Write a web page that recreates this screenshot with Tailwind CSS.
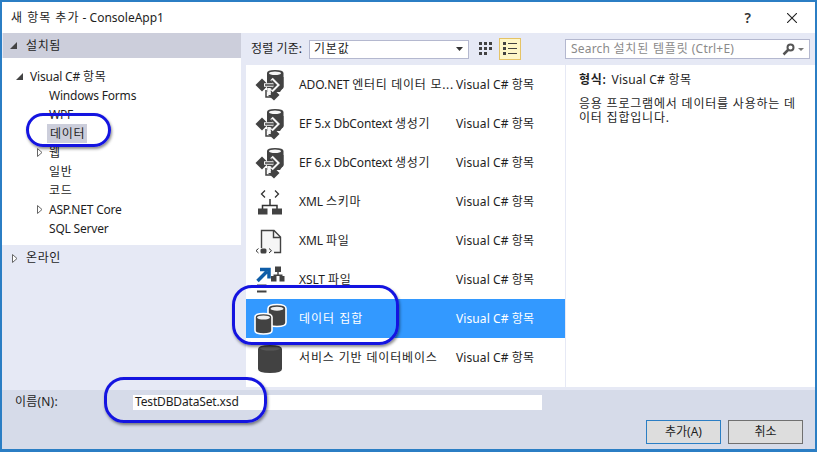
<!DOCTYPE html>
<html lang="ko"><head><meta charset="utf-8">
<script src="https://cdn.jsdelivr.net/npm/@tailwindcss/browser@4"></script>
</head>
<body class="bg-white">
<div class="relative w-[817px] h-[452px] overflow-hidden bg-white border-x-2 border-t-2 border-b-[3px] border-[#2b7ec4] flex flex-col font-['Noto_Sans','Noto_Sans_CJK_KR',sans-serif] text-[12px] leading-[16px] text-[#1e1e1e]">
  <svg width="0" height="0" class="absolute">
    <defs>
      <g id="ef">
        <path d="M12 5 Q12 2 20 2 Q28.500 2 28.500 5 V19 Q28.500 21 25 22 L12 9Z" fill="#424242"/>
        <ellipse cx="20" cy="5.200" rx="6" ry="1.700" fill="#f6f6f6"/>
        <path d="M12 9H28.500V19L25 24H12Z" fill="#424242"/>
        <path d="M0.500 17 L7 10.500 L13.500 17 L7 23.500Z" fill="#424242"/>
        <path d="M13 27 L19 21.500 L24.500 27 L19 32.500 Z" fill="#424242"/>
        <path d="M9 17 H21 M16.500 11 L22.500 17 L16.500 23 M14 20 V27" fill="none" stroke="#f6f6f6" stroke-width="3.500"/>
        <path d="M10 17 H21 M16.500 12.500 L21 17 L16.500 21.500" fill="none" stroke="#424242" stroke-width="1.700"/>
        <path d="M11 22 V29 H16" fill="none" stroke="#424242" stroke-width="1.500"/>
      </g>
    </defs>
  </svg>

  <div class="h-[31px] shrink-0 flex items-center pl-[9px] relative">
    <span><span class="tracking-[1px]">새 항목 추가</span> - ConsoleApp1</span>
    <span class="ml-auto mr-[36px] text-[14px] font-semibold text-[#333]">?</span>
    <svg width="10" height="10" viewBox="0 0 10 10" class="mr-[18px]"><path d="M0 0L10 10M10 0L0 10" stroke="#222" stroke-width="1.100"/></svg>
  </div>

  <div class="flex-1 flex bg-[#e6e9f5] pt-0 min-h-0">
    <div class="w-[239px] shrink-0 flex flex-col pl-[1px]">
      <div class="h-[25px] bg-[#cccedb] flex items-center pl-[7px] gap-[9px] shrink-0 tracking-[0.6px]">
        <svg width="7" height="7" viewBox="0 0 7 7"><path d="M0 7H7V0Z" fill="#444"/></svg>
        <span>설치됨</span>
      </div>
      <div class="h-[187px] bg-white -ml-px pt-[9px] shrink-0 flex flex-col tracking-[-0.2px]">
        <div class="h-[19px] flex items-center pl-[14px] gap-[7px]"><svg width="7" height="7" viewBox="0 0 7 7"><path d="M0 7H7V0Z" fill="#444"/></svg><span>Visual C# <span class="tracking-[0.8px]">항목</span></span></div>
        <div class="h-[19px] flex items-center pl-[47px]">Windows Forms</div>
        <div class="h-[19px] flex items-center pl-[47px]">WPF</div>
        <div class="h-[19px] flex items-center pl-[45px]"><span class="bg-[#cccedb] h-[19px] px-[3px] w-[40px] flex items-center tracking-[0.7px] whitespace-nowrap">데이터</span></div>
        <div class="h-[19px] flex items-center pl-[35px] gap-[6px]"><svg width="6" height="9" viewBox="0 0 6 9"><path d="M0.500 0.500L5 4.500L0.500 8.500Z" fill="#fff" stroke="#666"/></svg><span>웹</span></div>
        <div class="h-[19px] flex items-center pl-[47px] tracking-[0.7px]">일반</div>
        <div class="h-[19px] flex items-center pl-[47px] tracking-[0.7px]">코드</div>
        <div class="h-[19px] flex items-center pl-[35px] gap-[6px]"><svg width="6" height="9" viewBox="0 0 6 9"><path d="M0.500 0.500L5 4.500L0.500 8.500Z" fill="#fff" stroke="#666"/></svg><span>ASP.NET Core</span></div>
        <div class="h-[19px] flex items-center pl-[47px]">SQL Server</div>
      </div>
      <div class="h-[26px] flex items-center pl-[9px] gap-[8px] tracking-[0.6px]"><svg width="6" height="9" viewBox="0 0 6 9"><path d="M0.500 0.500L5 4.500L0.500 8.500Z" fill="#fff" stroke="#666"/></svg><span>온라인</span></div>
    </div>

    <div class="flex-1 flex flex-col min-w-0">
      <div class="h-[32px] shrink-0 flex items-center pl-[10px] relative">
        <span class="w-[58px] tracking-[0.1px]">정렬 기준:</span>
        <div class="w-[160px] h-[19px] bg-white border border-[#b4b8cf] flex items-center pl-[4px] pr-[5px] justify-between tracking-[0.8px]"><span>기본값</span><svg width="7" height="4" viewBox="0 0 7 4"><path d="M0 0H7L3.500 4Z" fill="#333"/></svg></div>
        <div class="w-[22px] h-[22px] ml-[6px] flex items-center justify-center">
          <svg width="14" height="14" viewBox="0 0 14 14" fill="#424242"><path d="M0 0h3v3h-3zM5 0h3v3h-3zM10 0h3v3h-3zM0 5h3v3h-3zM5 5h3v3h-3zM10 5h3v3h-3zM0 10h3v3h-3zM5 10h3v3h-3z"/></svg>
        </div>
        <div class="w-[22px] h-[22px] ml-[2px] bg-[#fdf6c8] border border-[#e5c365] flex items-center justify-center">
          <svg width="14" height="14" viewBox="0 0 14 14" fill="#424242"><path d="M0 0h3v3h-3zM0 5h3v3h-3zM0 10h3v3h-3zM5 1h9v1h-9zM5 6h9v1h-9zM5 11h9v1h-9z"/></svg>
        </div>
        <div class="absolute left-[324px] top-[6px] w-[245px] h-[20px] bg-white border border-[#b4b8cf] flex items-center pl-[5px] text-[#8a8a8a] tracking-[0.2px]">
          <span>Search <span class="tracking-[0.8px]">설치된 템플릿</span> (Ctrl+E)</span>
          <svg width="13" height="13" viewBox="0 0 13 13" class="ml-auto"><circle cx="8.500" cy="4.500" r="3" fill="none" stroke="#555" stroke-width="2"/><path d="M6 7L1.500 11.500" stroke="#555" stroke-width="2.500"/></svg>
          <svg width="6" height="3" viewBox="0 0 6 3" class="ml-[3px] mr-[5px]"><path d="M0 0H6L3 3Z" fill="#777"/></svg>
        </div>
      </div>
      <div class="flex-1 flex min-h-0 pl-[5px] pb-[3px]">
        <div class="w-[319px] bg-white shrink-0 border-r border-[#e6e9f5] box-content flex flex-col">

          <div class="h-[39px] shrink-0 flex items-center pl-[9px]">
            <svg width="30" height="34" viewBox="0 0 30 34" class="w-[30px] shrink-0"><use href="#ef"/></svg>
            <span class="ml-[14px] w-[157px] whitespace-nowrap tracking-[-0.1px]">ADO.NET <span class="tracking-[0.7px]">엔터티 데이터 모...</span></span><span class="tracking-[0.1px]">Visual C# 항목</span>
          </div>
          <div class="h-[39px] shrink-0 flex items-center pl-[9px]">
            <svg width="30" height="34" viewBox="0 0 30 34" class="w-[30px] shrink-0"><use href="#ef"/></svg>
            <span class="ml-[14px] w-[157px] whitespace-nowrap tracking-[-0.15px]">EF 5.x DbContext <span class="tracking-[0.7px]">생성기</span></span><span class="tracking-[0.1px]">Visual C# 항목</span>
          </div>
          <div class="h-[39px] shrink-0 flex items-center pl-[9px]">
            <svg width="30" height="34" viewBox="0 0 30 34" class="w-[30px] shrink-0"><use href="#ef"/></svg>
            <span class="ml-[14px] w-[157px] whitespace-nowrap tracking-[-0.15px]">EF 6.x DbContext <span class="tracking-[0.7px]">생성기</span></span><span class="tracking-[0.1px]">Visual C# 항목</span>
          </div>
          <div class="h-[39px] shrink-0 flex items-center pl-[9px]">
            <svg width="30" height="34" viewBox="0 0 30 34" class="w-[30px] shrink-0" fill="none">
              <path d="M10 5.500L6.500 9L10 12.500M20 5.500L23.500 9L20 12.500" stroke="#333" stroke-width="1.300"/>
              <path d="M15 14V20M7.500 24V20.500H22V24" stroke="#333" stroke-width="1.500"/>
              <path d="M3 23.500h9.500v6h-9.500zM17 23.500h10v6h-10z" fill="#424242"/>
            </svg>
            <span class="ml-[14px] w-[157px] whitespace-nowrap tracking-[-0.1px]">XML <span class="tracking-[0.7px]">스키마</span></span><span class="tracking-[0.1px]">Visual C# 항목</span>
          </div>
          <div class="h-[39px] shrink-0 flex items-center pl-[9px]">
            <svg width="30" height="34" viewBox="0 0 30 34" class="w-[30px] shrink-0" fill="none">
              <path d="M6.500 6.500H19L25.500 13V28H6.500Z" fill="#f6f6f6"/>
              <path d="M6.500 24V6.500H19L25.500 13V28.500H19M18.500 6.500V13.500H25.500" stroke="#424242" stroke-width="1.400"/>
              <path d="M3.500 24.500L1 26.700L3.500 29M14 24.500L16.500 26.700L14 29" stroke="#333" stroke-width="1"/>
              <rect x="5.500" y="24.500" width="6" height="5" rx="1.500" fill="#424242"/>
            </svg>
            <span class="ml-[14px] w-[157px] whitespace-nowrap tracking-[-0.1px]">XML <span class="tracking-[0.7px]">파일</span></span><span class="tracking-[0.1px]">Visual C# 항목</span>
          </div>
          <div class="h-[39px] shrink-0 flex items-center pl-[9px]">
            <svg width="30" height="34" viewBox="0 0 30 34" class="w-[30px] shrink-0">
              <path d="M2.500 18L12 8.500M5 6.500H14V15.500" fill="none" stroke="#0e5da8" stroke-width="3.500"/>
              <path d="M20 3.500h6v5.500h-6zM22.300 9h1.400v3h-1.400zM18.500 11.500h9v1.500h-9zM16 13h5.500v5.500H16zM24.500 13h5v5.500h-5z" fill="#424242"/>
              <path d="M2 21.500H11.500V23.500H2zM2 27.500H11.500V29.500H2z" fill="#424242"/>
            </svg>
            <span class="ml-[14px] w-[157px] whitespace-nowrap tracking-[-0.1px]">XSLT <span class="tracking-[0.7px]">파일</span></span><span class="tracking-[0.1px]">Visual C# 항목</span>
          </div>
          <div class="h-[39px] shrink-0 flex items-center pl-[9px] bg-[#3399ff] text-white">
            <svg width="30" height="34" viewBox="0 0 30 34" class="w-[30px] shrink-0 overflow-visible">
              <path d="M13 6.500 Q13 2.500 22 2.500 Q31 2.500 31 6.500 V20.500 Q31 24.500 22 24.500 Q13 24.500 13 20.500Z" fill="#424242" stroke="#fff" stroke-width="1.600"/>
              <ellipse cx="22" cy="6.700" rx="6.500" ry="2" fill="#f0f0f0"/>
              <path d="M0 15 Q0 11.500 8.500 11.500 Q17 11.500 17 15 V28.500 Q17 32 8.500 32 Q0 32 0 28.500Z" fill="#424242" stroke="#fff" stroke-width="1.600"/>
              <ellipse cx="8.500" cy="15.500" rx="6.500" ry="2" fill="#f0f0f0"/>
            </svg>
            <span class="ml-[14px] w-[157px] whitespace-nowrap tracking-[1px]">데이터 집합</span><span class="tracking-[0.1px]">Visual C# 항목</span>
          </div>
          <div class="h-[39px] shrink-0 flex items-center pl-[9px]">
            <svg width="30" height="34" viewBox="0 0 30 34" class="w-[30px] shrink-0">
              <path d="M3 8 Q3 4 15 4 Q27 4 27 8 V28 Q27 32 15 32 Q3 32 3 28Z" fill="#424242"/>
              <ellipse cx="15" cy="7.500" rx="10" ry="2" fill="#5a5a5a"/>
            </svg>
            <span class="ml-[14px] w-[157px] whitespace-nowrap tracking-[0.85px]">서비스 기반 데이터베이스</span><span class="tracking-[0.1px]">Visual C# 항목</span>
          </div>
        </div>
        <div class="flex-1 bg-white pl-[13px] pt-[8px] leading-[14px] tracking-[0.2px]">
          <div class="h-[24px]"><span class="font-semibold mr-[5px] tracking-[0.7px]">형식:</span>Visual C# <span class="tracking-[0.7px]">항목</span></div>
          <div class="pr-[12px] tracking-[0.8px]">응용 프로그램에서 데이터를 사용하는 데이터 집합입니다.</div>
        </div>
      </div>
    </div>
  </div>

  <div class="h-[59px] shrink-0 bg-[#d6dbe9] relative pl-[13px] pt-[4px]">
    <div class="flex items-center h-[16px]">
      <span class="w-[118px] tracking-[0.2px]">이름(N):</span>
      <div class="w-[409px] h-[15px] bg-white pl-[2px] flex items-center tracking-[-0.15px]">TestDBDataSet.xsd</div>
    </div>
    <div class="flex justify-end gap-[7px] pr-[12px] mt-[10px]">
      <button class="w-[75px] h-[24px] bg-[#dddddd] border border-[#2b7ec4] text-center">추가(A)</button>
      <button class="w-[75px] h-[24px] bg-[#dddddd] border border-[#707070] text-center">취소</button>
    </div>
  </div>

  <div class="absolute left-[24px] top-[111px] w-[85px] h-[34px] rounded-[17px] border-[3px] border-[#1414e0] shadow-[1px_2px_3px_rgba(0,0,0,0.45)]"></div>
  <div class="absolute left-[230px] top-[283px] w-[167px] h-[60px] rounded-[20px] border-[3px] border-[#1414e0] shadow-[1px_2px_3px_rgba(0,0,0,0.45)]"></div>
  <div class="absolute left-[102px] top-[375px] w-[163px] h-[46px] rounded-[20px] border-[3px] border-[#1414e0] shadow-[1px_2px_3px_rgba(0,0,0,0.45)]"></div>
</div>
</body></html>
